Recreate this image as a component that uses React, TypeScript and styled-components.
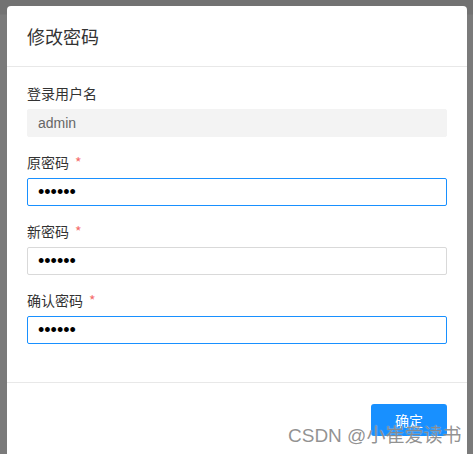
import React from "react";
import styled, { createGlobalStyle } from "styled-components";

const GlobalStyle = createGlobalStyle`
  html, body {
    margin: 0;
    padding: 0;
    height: 100%;
    overflow: hidden;
  }
  body {
    background: linear-gradient(to right, #7a7a7a 0, #7a7a7a 470px, #5e5e5e 470px);
    font-family: "Liberation Sans", "Noto Sans CJK SC", sans-serif;
  }
`;

const Page = styled.div`
  position: relative;
  width: 473px;
  height: 454px;
  overflow: hidden;
  padding: 6px 0 0 7px;
  box-sizing: border-box;
  background: linear-gradient(to bottom, #727272 0, #727272 14px, #7a7a7a 15px);
`;

const Modal = styled.div`
  width: 460px;
  height: 470px;
  background: #fff;
  border-radius: 4px 4px 0 0;
  display: flex;
  flex-direction: column;
`;

const Header = styled.div`
  height: 61px;
  box-sizing: border-box;
  padding: 0 20px;
  display: flex;
  align-items: center;
  border-bottom: 1px solid #e8e8e8;
`;

const Title = styled.h2`
  margin: 0;
  font-family: "Noto Sans CJK SC", sans-serif;
  font-size: 18px;
  font-weight: 400;
  color: #333;
  line-height: 24px;
`;

const Body = styled.div`
  padding: 16px 20px 23px;
  border-bottom: 1px solid #e8e8e8;
`;

const Item = styled.div`
  display: flex;
  flex-direction: column;
  margin-bottom: 15px;
`;

const Label = styled.label`
  font-family: "Noto Sans CJK SC", sans-serif;
  font-size: 14px;
  line-height: 20px;
  color: #333;
  margin-bottom: 6px;
`;

const Star = styled.span`
  color: #f56c6c;
  margin-left: 6px;
`;

const Input = styled.input<{ $focused?: boolean; $disabled?: boolean }>`
  box-sizing: border-box;
  width: 100%;
  height: 28px;
  padding: 0 10px;
  border-radius: 2px;
  outline: none;
  font-family: "Liberation Sans", "Noto Sans CJK SC", sans-serif;
  font-size: ${(p) => (p.$disabled ? "14px" : "18px")};
  color: #000;
  border: 1px solid
    ${(p) => (p.$disabled ? "#f3f3f3" : p.$focused ? "#1890ff" : "#d9d9d9")};
  background: ${(p) => (p.$disabled ? "#f3f3f3" : "#fff")};
  &:disabled {
    color: #666;
    -webkit-text-fill-color: #666;
  }
`;

const Footer = styled.div`
  padding: 21px 20px;
  display: flex;
  justify-content: flex-end;
`;

const Button = styled.button`
  width: 76px;
  height: 32px;
  border: none;
  border-radius: 3px;
  background: #1890ff;
  color: #fff;
  font-family: "Noto Sans CJK SC", sans-serif;
  font-size: 14px;
  padding: 0;
`;

const Watermark = styled.div`
  position: absolute;
  left: 288px;
  top: 424px;
  font-family: "Liberation Sans", "Noto Sans CJK SC", sans-serif;
  font-size: 19px;
  line-height: 24px;
  color: rgba(110, 110, 110, 0.75);
  white-space: nowrap;
  text-shadow: 0 0 1px rgba(255, 255, 255, 0.8);
`;

const fields = [
  { label: "原密码", focused: true },
  { label: "新密码", focused: false },
  { label: "确认密码", focused: true },
];

export default function App() {
  return (
    <>
      <GlobalStyle />
      <Page>
        <Modal>
          <Header>
            <Title>修改密码</Title>
          </Header>
          <Body>
            <Item>
              <Label>登录用户名</Label>
              <Input $disabled disabled value="admin" readOnly />
            </Item>
            {fields.map((f) => (
              <Item key={f.label}>
                <Label>
                  {f.label}
                  <Star>*</Star>
                </Label>
                <Input type="password" $focused={f.focused} value="123456" readOnly />
              </Item>
            ))}
          </Body>
          <Footer>
            <Button>确定</Button>
          </Footer>
        </Modal>
        <Watermark>CSDN @小崔爱读书</Watermark>
      </Page>
    </>
  );
}
